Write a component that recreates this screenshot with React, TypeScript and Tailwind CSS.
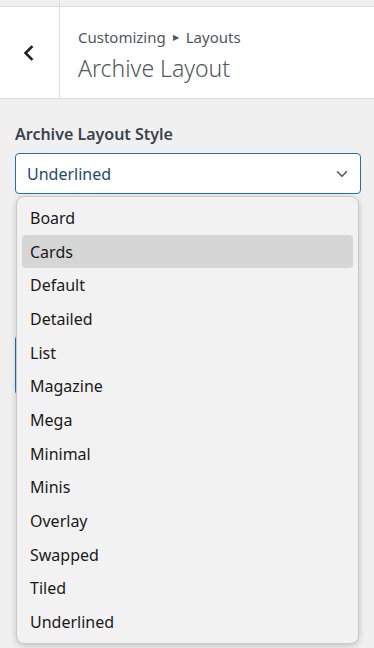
import { ChevronDown } from "lucide-react";

const options = [
  "Board",
  "Cards",
  "Default",
  "Detailed",
  "List",
  "Magazine",
  "Mega",
  "Minimal",
  "Minis",
  "Overlay",
  "Swapped",
  "Tiled",
  "Underlined",
];

function BackIcon() {
  return (
    <svg width="14" height="18" viewBox="0 0 14 18" fill="none" aria-hidden>
      <path
        d="M9.5 3L3.5 9l6 6"
        stroke="#1d2327"
        strokeWidth="2.6"
        strokeLinecap="square"
      />
    </svg>
  );
}

export default function App() {
  const hovered = "Cards";

  return (
    <div
      className="relative h-[648px] w-[374px] overflow-hidden bg-[#f0f0f1]"
      style={{ fontFamily: '"Noto Sans", "Open Sans", sans-serif' }}
    >
      {/* strip above header */}
      <div className="flex h-[7px] border-b border-[#dcdcde]">
        <div className="w-[60px] border-r border-[#dcdcde]" />
      </div>

      <header className="flex h-[92px] border-b border-[#dcdcde] bg-white">
        <button
          type="button"
          className="flex w-[60px] shrink-0 items-center justify-center border-r border-[#dcdcde] pr-[2px]"
        >
          <BackIcon />
        </button>
        <div className="flex flex-col pl-[18px] pt-[20px]">
          <p className="flex items-center gap-[7px] text-[15px] leading-[20px] text-[#50575e]">
            Customizing
            <span className="text-[8px] leading-none">▶</span>
            Layouts
          </p>
          <h1 className="mt-[8px] text-[23px] font-light leading-[27px] text-[#50575e]">
            Archive Layout
          </h1>
        </div>
      </header>

      <main className="pl-[15px] pt-[24px]">
        <label className="block text-[16px] font-semibold leading-[22px] text-[#3c434a]">
          Archive Layout Style
        </label>
        <div className="mt-[8px] flex h-[41px] w-[346px] items-center justify-between rounded-[4px] border border-[#2271b1] bg-white pl-[11px] pr-[9px]">
          <span className="text-[16px] text-[#1d4a70]">Underlined</span>
          <ChevronDown className="h-[18px] w-[18px] text-[#50575e]" strokeWidth={2} />
        </div>

        {/* field hidden under the open list */}
        <div className="mt-[141px] h-[60px] w-[300px] rounded-[4px] border border-[#2271b1] bg-white" />
      </main>

      <ul className="absolute left-[16px] top-[196px] w-[343px] rounded-[8px] border border-[#c9c9c9] bg-[#f2f2f2] px-[5px] py-[4px] shadow-[0_2px_6px_rgba(0,0,0,0.18)]">
        {options.map((o) => (
          <li
            key={o}
            className={
              "flex h-[33.7px] items-center rounded-[4px] pl-[8px] text-[16px] text-[#1a1a1a] " +
              (o === hovered ? "bg-[#d6d6d6]" : "")
            }
          >
            {o}
          </li>
        ))}
      </ul>
    </div>
  );
}
